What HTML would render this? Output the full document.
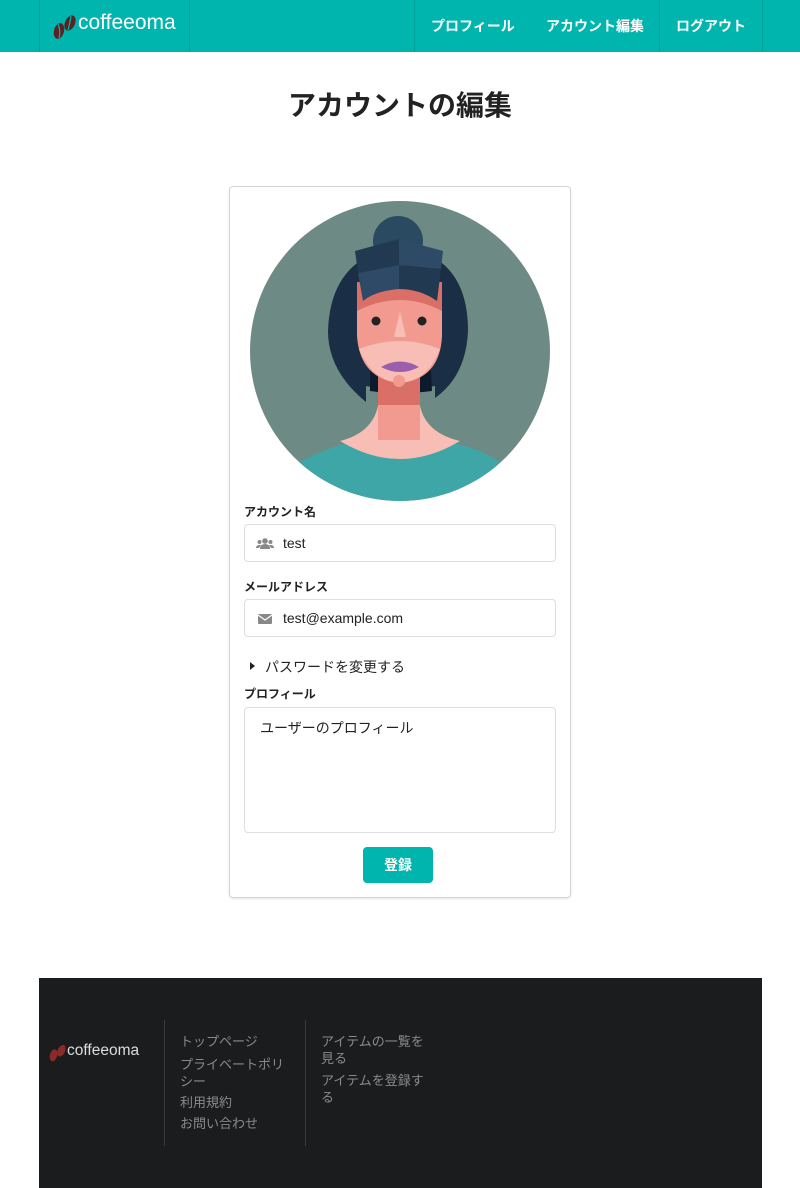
<!DOCTYPE html>
<html><head><meta charset="utf-8"><style>
*{box-sizing:border-box;margin:0;padding:0}
body{width:800px;height:1188px;background:#fff;font-family:"Liberation Sans","Noto Sans CJK JP",sans-serif;position:relative;overflow:hidden;color:#222}
.hdr{position:absolute;left:0;top:0;width:800px;height:52px;background:#00b5ad}
.div{position:absolute;top:0;height:52px;width:1px;background:rgba(0,0,0,.12)}
.nav{position:absolute;top:0;height:52px;line-height:52px;color:#fff;font-weight:bold;font-size:14px}
h1{position:absolute;top:84px;left:0;width:800px;text-align:center;font-size:28px;font-weight:bold;color:#222}
.card{position:absolute;left:229px;top:186px;width:342px;height:712px;border:1px solid #d4d4d5;border-radius:4px;box-shadow:0 1px 2px rgba(0,0,0,.1)}
.lbl{position:absolute;left:244px;font-size:12px;font-weight:bold;color:#222}
.inp{position:absolute;left:244px;width:312px;height:38px;border:1px solid #dedede;border-radius:4px;font-size:14px;color:#222}
.inp span{position:absolute;left:38px;top:10px}
.btn{position:absolute;left:363px;top:847px;width:70px;height:36px;background:#00b5ad;color:#fff;font-weight:bold;font-size:14px;text-align:center;line-height:36px;border-radius:4px}
.ft{position:absolute;left:39px;top:978px;width:723px;height:210px;background:#1b1c1d}
.fl{position:absolute;color:#8a8a8a;font-size:13px;line-height:17px}
</style></head><body>
<div class="hdr">
<div class="div" style="left:39px"></div><div class="div" style="left:189px"></div><div class="div" style="left:414px"></div><div class="div" style="left:659px"></div><div class="div" style="left:762px"></div>
<svg style="position:absolute;left:52px;top:12px" width="26" height="28" viewBox="0 0 26 28"><ellipse cx="7" cy="19" rx="5" ry="8" transform="rotate(15 7 19)" fill="#5a2222"/><ellipse cx="18" cy="11" rx="5" ry="8" transform="rotate(25 18 11)" fill="#5a2222"/><path d="M6 12 Q9 19 7 26" stroke="#00b5ad" stroke-width="1.2" fill="none"/><path d="M19 4 Q18 11 16 18" stroke="#00b5ad" stroke-width="1.2" fill="none"/></svg>
<div style="position:absolute;left:78px;top:11px;color:#fff;font-size:21px">coffeeoma</div>
<div class="nav" style="left:431px">プロフィール</div>
<div class="nav" style="left:546px">アカウント編集</div>
<div class="nav" style="left:676px">ログアウト</div>
</div>
<h1>アカウントの編集</h1>
<div class="card"></div>
<svg style="position:absolute;left:250px;top:201px" width="300" height="300" viewBox="0 0 300 300">
<defs><clipPath id="c"><circle cx="150" cy="150" r="150"/></clipPath></defs>
<g clip-path="url(#c)">
<rect width="300" height="300" fill="#6d8a84"/>
<path d="M116 201 Q78 170 78 130 Q80 70 125 52 L175 52 Q218 70 218 130 Q216 175 185 197 L185 185 Q150 192 116 185 Z" fill="#1a2e45"/>
<path d="M120 150 L180 150 L182 190 Q150 194 120 190Z" fill="#0b1a2c"/>
<path d="M50 261 Q80 245 100 242 L200 242 Q225 245 250 261 L300 300 L0 300 Z" fill="#3ea6a6"/>
<path d="M90 240 Q122 232 128 205 L170 205 Q176 232 210 240 Q180 258 150 258 Q120 258 90 240Z" fill="#f8bdb4"/>
<rect x="128" y="175" width="42" height="64" fill="#f39a90"/>
<rect x="128" y="175" width="42" height="29" fill="#d96f66"/>
<path d="M107 81 L192 81 L192 135 Q190 178 150 182 Q110 178 107 135 Z" fill="#f39a90"/>
<path d="M107 81 L192 81 L192 110 Q150 88 107 110Z" fill="#d96f66"/>
<path d="M109 148 Q150 132 190 148 Q178 180 150 182 Q122 180 109 148Z" fill="#f8bdb4"/>
<path d="M144 136 L150 110 L156 136Z" fill="#f8bdb4"/>
<circle cx="126" cy="120" r="4.5" fill="#222"/><circle cx="172" cy="120" r="4.5" fill="#222"/>
<path d="M131 166 Q150 155 169 166 Q150 176 131 166Z" fill="#9b5eac"/>
<circle cx="149" cy="180" r="6" fill="#f39a90"/>
<circle cx="148" cy="40" r="25" fill="#2a4a62"/>
<path d="M105 50 L149 38 L149 64 L108 72Z" fill="#213a52"/>
<path d="M149 38 L193 50 L191 68 L149 64Z" fill="#2e4a66"/>
<path d="M108 72 L149 64 L149 88 Q125 90 113 100Z" fill="#2e4a66"/>
<path d="M149 64 L191 68 L187 100 Q170 88 149 88Z" fill="#213a52"/>
</g></svg>
<div class="lbl" style="top:503px">アカウント名</div>
<div class="inp" style="top:524px"><svg style="position:absolute;left:11px;top:13px" width="18" height="11" viewBox="0 0 18 11"><circle cx="9" cy="3" r="2.8" fill="#888"/><circle cx="3.5" cy="4" r="2" fill="#888"/><circle cx="14.5" cy="4" r="2" fill="#888"/><path d="M4 11 Q4 6 9 6 Q14 6 14 11Z M0 10 Q0 7 3.5 7 L5 7 L3 10Z M18 10 Q18 7 14.5 7 L13 7 L15 10Z" fill="#888"/></svg><span>test</span></div>
<div class="lbl" style="top:578px">メールアドレス</div>
<div class="inp" style="top:599px"><svg style="position:absolute;left:13px;top:14px" width="14" height="10" viewBox="0 0 14 10"><rect width="14" height="10" rx="1" fill="#888"/><path d="M0 1 L7 6 L14 1" stroke="#fff" stroke-width="1.2" fill="none"/></svg><span>test@example.com</span></div>
<svg style="position:absolute;left:250px;top:662px" width="5" height="8"><path d="M0 0 L5 4 L0 8Z" fill="#222"/></svg>
<div style="position:absolute;left:265px;top:657px;font-size:14px">パスワードを変更する</div>
<div class="lbl" style="top:685px">プロフィール</div>
<div class="inp" style="top:707px;height:126px"><span style="left:15px;top:10px">ユーザーのプロフィール</span></div>
<div class="btn">登録</div>
<div class="ft">
<div style="position:absolute;left:125px;top:42px;width:1px;height:126px;background:#3a3a3a"></div>
<div style="position:absolute;left:266px;top:42px;width:1px;height:126px;background:#3a3a3a"></div>
<svg style="position:absolute;left:9px;top:65px" width="20" height="20" viewBox="0 0 18 18"><ellipse cx="5" cy="11" rx="3.3" ry="5.5" transform="rotate(15 5 11)" fill="#8a2a2a"/><ellipse cx="12" cy="7" rx="3.3" ry="5.5" transform="rotate(25 12 7)" fill="#8a2a2a"/></svg>
<div style="position:absolute;left:28px;top:64px;color:#ddd;font-size:15.5px">coffeeoma</div>
<div class="fl" style="left:141px;top:55px;width:110px">トップページ</div>
<div class="fl" style="left:141px;top:78px;width:110px">プライベートポリシー</div>
<div class="fl" style="left:141px;top:116px">利用規約</div>
<div class="fl" style="left:141px;top:137px">お問い合わせ</div>
<div class="fl" style="left:282px;top:55px;width:110px">アイテムの一覧を見る</div>
<div class="fl" style="left:282px;top:94px;width:110px">アイテムを登録する</div>
</div>
</body></html>
